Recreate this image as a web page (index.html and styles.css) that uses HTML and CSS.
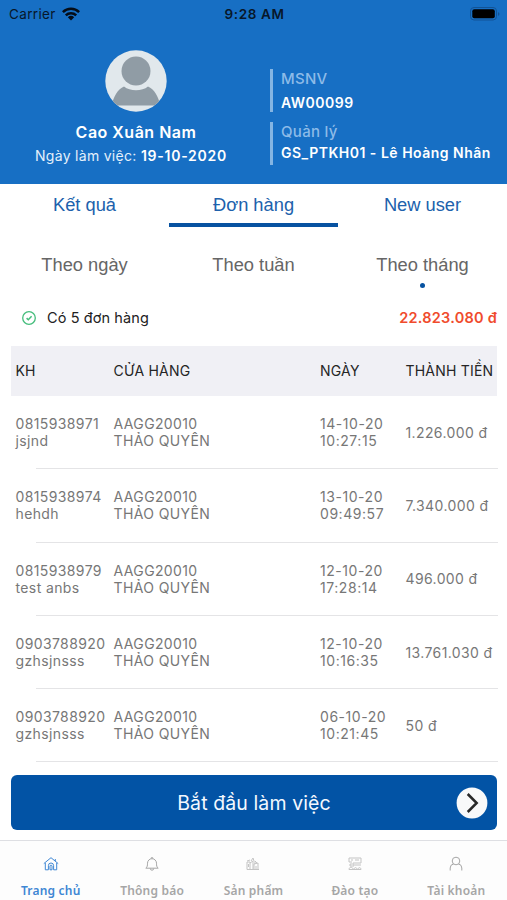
FILE: index.html
```html
<!DOCTYPE html>
<html lang="vi">
<head>
<meta charset="utf-8">
<title>Trang chủ</title>
<link rel="stylesheet" href="styles.css">
</head>
<body>
<header class="hero">
  <div class="status">
    <div class="carrier"><span>Carrier</span>
      <svg width="18" height="14" viewBox="0 0 18 14"><g fill="none" stroke="#050d18" stroke-width="2.5"><path d="M.9 5.1a11.6 11.6 0 0 1 16.2 0"/><path d="M3.8 8.3a7.4 7.4 0 0 1 10.4 0"/></g><path fill="#050d18" d="M9 13.5 5.8 10.2a4.7 4.7 0 0 1 6.4 0z"/></svg>
    </div>
    <span class="time">9:28 AM</span>
    <svg class="battery" width="30" height="14" viewBox="0 0 30 14"><rect x=".5" y=".5" width="26" height="12.500" rx="3.5" fill="none" stroke="#125395"/><rect x="2.300" y="2.300" width="22.500" height="9" rx="2" fill="#000"/><path d="M28 5q3 2 0 4z" fill="#125395"/></svg>
  </div>
  <div class="profile">
    <div class="person">
      <svg class="avatar" width="62" height="62" viewBox="0 0 62 62"><defs><clipPath id="disc"><circle cx="31" cy="31" r="30.7"/></clipPath></defs><circle cx="31" cy="31" r="30.7" fill="#e1e8ec"/><g clip-path="url(#disc)" fill="#909ca5"><circle cx="31" cy="21" r="14.5"/><path d="M7 55.5C8 47 13 39 19 36.5c6 5 18 5 24 0 6 2.500 11 10.500 12 19z"/></g></svg>
      <div class="name">Cao Xuân Nam</div>
      <div class="workday">Ngày làm việc: <b>19-10-2020</b></div>
    </div>
    <div class="facts">
      <div class="fact"><span class="key">MSNV</span><b class="code">AW00099</b></div>
      <div class="fact"><span class="key">Quản lý</span><b class="manager">GS_PTKH01 - Lê Hoàng Nhân</b></div>
    </div>
  </div>
</header>
<nav class="tabs"><a>Kết quả</a><a class="active">Đơn hàng</a><a>New user</a></nav>
<nav class="periods"><a>Theo ngày</a><a>Theo tuần</a><a class="active">Theo tháng</a></nav>
<div class="summary">
  <svg width="14" height="14" viewBox="0 0 14 14" fill="none" stroke="#45bd7c"><circle cx="7" cy="7" r="6.3" stroke-width="1.3"/><path d="m4.600 7.100 1.700 1.600 3.300-3.500" stroke-width="1.500"/></svg>
  <span class="count">Có 5 đơn hàng</span><b class="total">22.823.080 đ</b>
</div>
<main class="orders">
  <div class="row head"><span>KH</span><span>CỬA HÀNG</span><span>NGÀY</span><span>THÀNH TIỀN</span></div>
  <div class="row"><span>0815938971<br>jsjnd</span><span>AAGG20010<br>THẢO QUYÊN</span><span class="date">14-10-20<br>10:27:15</span><span>1.226.000 đ</span></div>
  <div class="row"><span>0815938974<br>hehdh</span><span>AAGG20010<br>THẢO QUYÊN</span><span class="date">13-10-20<br>09:49:57</span><span>7.340.000 đ</span></div>
  <div class="row"><span>0815938979<br>test anbs</span><span>AAGG20010<br>THẢO QUYÊN</span><span class="date">12-10-20<br>17:28:14</span><span>496.000 đ</span></div>
  <div class="row"><span>0903788920<br>gzhsjnsss</span><span>AAGG20010<br>THẢO QUYÊN</span><span class="date">12-10-20<br>10:16:35</span><span>13.761.030 đ</span></div>
  <div class="row"><span>0903788920<br>gzhsjnsss</span><span>AAGG20010<br>THẢO QUYÊN</span><span class="date">06-10-20<br>10:21:45</span><span>50 đ</span></div>
</main>
<button class="start"><span>Bắt đầu làm việc</span>
  <svg width="32" height="32" viewBox="0 0 32 32"><circle cx="16" cy="16" r="15.400" fill="#f8f9fa"/><path d="m11.700 7 9 9-9 9" fill="none" stroke="#292929" stroke-width="2.500"/></svg>
</button>
<footer class="bottom">
  <a class="active"><svg width="16" height="16" viewBox="0 0 16 16"><path d="M.8 7.600 8 1.700l7.200 5.900M2.300 7v6.800h3.100V9.600a2.600 2.600 0 0 1 5.200 0v4.200h3.100V7M12.300 5V3M7 13.800v-3.600a1 1 0 0 1 2 0v3.600H7"/></svg><span>Trang chủ</span></a>
  <a><svg width="16" height="16" viewBox="0 0 16 16"><path d="M1.800 12.200c1.500-1.200 1.700-2.500 1.700-5a4.500 4.500 0 0 1 9 0c0 2.500.2 3.800 1.700 5zM6.300 12.500a1.700 1.700 0 0 0 3.400 0M7 2.500a1 1 0 0 1 2 0"/></svg><span>Thông báo</span></a>
  <a class="faint"><svg width="16" height="16" viewBox="0 0 16 16"><path d="M2 13.500V6h3v7.500M3.500 8v3M5 7l3-2v8.500M6 5l2-3 1 3M9 13.500V8l4-1v6.500H9M10 8V5l2 2M11 10v3M2 5l3-1M2 13.500h12"/></svg><span>Sản phẩm</span></a>
  <a class="faint"><svg width="16" height="16" viewBox="0 0 16 16"><path d="M2 2h12v5H6M2 2v4h3M4 4h2M8 4h4M3 8h4v2H3zM8 9h6M2 13.500c0-3 4-3 4 0M7 13.500c0-2.500 3-2.500 3 0M11 13.500c0-2.500 3-2.500 3 0M2 13.500h12"/></svg><span>Đào tạo</span></a>
  <a><svg width="16" height="16" viewBox="0 0 16 16"><circle cx="8" cy="5" r="3.800"/><path d="M2.200 14.500V12a4 4 0 0 1 3.300-4M13.800 14.500V12a4 4 0 0 0-3.300-4"/></svg><span>Tài khoản</span></a>
</footer>
</body>
</html>
```

FILE: styles.css
```css
* { box-sizing: border-box; }
body { margin: 0; width: 507px; height: 900px; overflow: hidden; background: #fff; font-family: Inter, sans-serif; display: flex; flex-direction: column; }
svg { display: block; flex: none; }
.hero { height: 184px; flex: none; background: #176fc4; color: #fff; }
.status { height: 28px; display: grid; grid-template-columns: 1fr auto 1fr; align-items: center; padding: 0 7px 0 9px; color: #07172a; font-size: 13.5px; line-height: 28px; }
.carrier { display: flex; align-items: center; gap: 6px; letter-spacing: .35px; }
.carrier svg { margin-bottom: 1px; }
.time { font-weight: 600; letter-spacing: .6px; }
.battery { justify-self: end; margin-bottom: 1px; }
.profile { display: flex; }
.person { width: 262px; padding: 22px 0 0 10px; display: flex; flex-direction: column; align-items: center; }
.name { margin-top: 9px; font-size: 16px; font-weight: 600; line-height: 22px; letter-spacing: .5px; }
.workday { margin: 2px 0 0 -10px; font-size: 14px; line-height: 22px; white-space: nowrap; color: #e4f0fb; letter-spacing: .3px; }
.workday b { font-weight: 600; color: #fff; letter-spacing: .75px; }
.facts { padding: 41px 0 0 8px; display: flex; flex-direction: column; gap: 10px; }
.fact { height: 43px; border-left: 3px solid #84b5e3; padding-left: 8px; display: flex; flex-direction: column; white-space: nowrap; }
.key { font-size: 15px; line-height: 20px; font-weight: 500; color: #8dbbe8; letter-spacing: .3px; }
.fact b { font-size: 14px; font-weight: 600; line-height: 20px; margin-top: 4px; letter-spacing: .5px; }
.fact .manager { margin-top: 1px; }
.tabs, .periods { display: grid; grid-template-columns: repeat(3, 1fr); flex: none; text-align: center; font-family: "Liberation Sans", sans-serif; font-size: 18.300px; }
.tabs { height: 43px; color: #2061ac; line-height: 41px; }
.tabs a { height: 43px; }
.tabs .active { border-bottom: 4px solid #0752a1; }
.periods { height: 72px; padding-top: 26px; line-height: 24px; color: #666; }
.periods a { display: flex; flex-direction: column; align-items: center; }
.periods .active::after { content: ""; width: 5px; height: 5px; margin-top: 6px; border-radius: 50%; background: #0752a1; }
.summary { height: 37px; flex: none; display: flex; align-items: center; padding: 0 10px 0 22px; font-size: 14.5px; }
.count { margin-left: 11px; color: #222; letter-spacing: .1px; }
.total { margin-left: auto; font-weight: 600; color: #f04b2c; letter-spacing: .25px; }
.orders { margin: 10px 9px 0 11px; flex: none; }
.row { height: 73.3px; display: grid; grid-template-columns: 98px 206.500px 85.500px 1fr; align-items: center; padding: 0 0 1px 4.500px; font-size: 14px; line-height: 17px; color: #777; letter-spacing: .38px; white-space: nowrap; position: relative; }
.row.head { height: 50px; width: 486px; background: #f0f0f5; color: #252525; font-size: 14px; letter-spacing: .2px; padding-bottom: 2px; }
.date { letter-spacing: .55px; }
.row:not(.head)::after { content: ""; position: absolute; left: 25px; right: 0; bottom: 0; height: 1px; background: #e4e4e6; }
.start { margin: 13px 10px 0 11px; height: 55px; flex: none; border: 0; border-radius: 6px; padding: 0 9px 0 41px; background: #0253a5; color: #f3f8ff; display: flex; align-items: center; font-family: Inter, sans-serif; font-size: 19.500px; letter-spacing: .1px; }
.start span { flex: 1; text-align: center; }
.bottom { margin-top: 10px; flex: 1; border-top: 1px solid #dedfe3; background: #fdfdfd; display: grid; grid-template-columns: repeat(5, 1fr); color: #a6a6a6; }
.bottom a { display: flex; flex-direction: column; align-items: center; padding-top: 15px; font: 600 12px/18px "Noto Sans", sans-serif; letter-spacing: .2px; white-space: nowrap; }
.bottom span { margin-top: 10px; }
.bottom svg { fill: none; stroke: currentColor; stroke-width: 1; }
.bottom .active { color: #3f87d4; }
.bottom .faint svg { opacity: .65; }
```
